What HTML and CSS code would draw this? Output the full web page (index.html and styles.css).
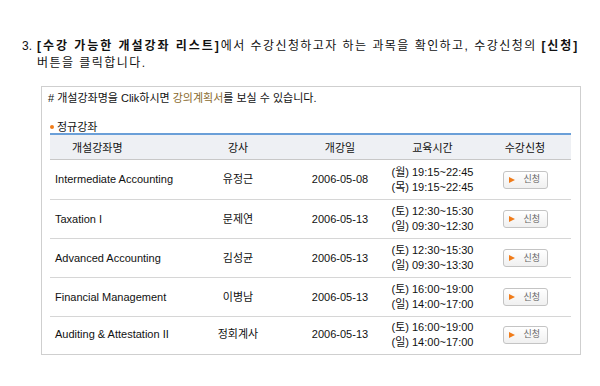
FILE: index.html
```html
<!DOCTYPE html>
<html lang="ko">
<head>
<meta charset="utf-8">
<title>개설강좌 리스트</title>
<link rel="stylesheet" href="styles.css">
</head>
<body>
<div class="step">
  <span class="num">3.</span>
  <p class="desc"><b>[수강 가능한 개설강좌 리스트]</b>에서 수강신청하고자 하는 과목을 확인하고, 수강신청의 <b>[신청]</b><br>버튼을 클릭합니다.</p>
</div>
<div class="box">
  <p class="note"># 개설강좌명을 Clik하시면 <span class="hl">강의계획서</span>를 보실 수 있습니다.</p>
  <h3 class="sect"><span class="dot"></span>정규강좌</h3>
  <table class="list">
    <colgroup><col class="c1"><col class="c2"><col class="c3"><col class="c4"><col class="c5"></colgroup>
    <thead>
      <tr><th class="name">개설강좌명</th><th>강사</th><th>개강일</th><th>교육시간</th><th>수강신청</th></tr>
    </thead>
    <tbody>
      <tr><td class="name">Intermediate Accounting</td><td>유정근</td><td>2006-05-08</td><td>(월) 19:15~22:45<br>(목) 19:15~22:45</td><td><span class="btn"><i></i>신청</span></td></tr>
      <tr><td class="name">Taxation I</td><td>문제연</td><td>2006-05-13</td><td>(토) 12:30~15:30<br>(일) 09:30~12:30</td><td><span class="btn"><i></i>신청</span></td></tr>
      <tr><td class="name">Advanced Accounting</td><td>김성균</td><td>2006-05-13</td><td>(토) 12:30~15:30<br>(일) 09:30~13:30</td><td><span class="btn"><i></i>신청</span></td></tr>
      <tr><td class="name">Financial Management</td><td>이병남</td><td>2006-05-13</td><td>(토) 16:00~19:00<br>(일) 14:00~17:00</td><td><span class="btn"><i></i>신청</span></td></tr>
      <tr><td class="name">Auditing &amp; Attestation II</td><td>정회계사</td><td>2006-05-13</td><td>(토) 16:00~19:00<br>(일) 14:00~17:00</td><td><span class="btn"><i></i>신청</span></td></tr>
    </tbody>
  </table>
</div>
</body>
</html>
```
FILE: styles.css
```css
body {
  margin: 0;
  background: #fff;
  color: #111;
  font-family: "Liberation Sans", "Noto Sans CJK KR", sans-serif;
  font-size: 12px;
}
.step {
  display: flex;
  padding: 38px 0 0 22px;
  line-height: 17px;
}
.num { width: 15px; flex: none; }
.desc {
  margin: 0;
  width: 550px;
  white-space: nowrap;
  letter-spacing: 1.45px;
}
.desc b { letter-spacing: 1.95px; }
.box {
  margin: 14px 0 0 41px;
  width: 538px;
  border: 1px solid #cfcfcf;
  padding: 3px 0 2px;
}
.note {
  margin: 0 0 0 6px;
  font-size: 11px;
  line-height: 16px;
}
.hl { color: #8a6a2c; }
.sect {
  margin: 15px 0 0 8px;
  font-size: 11px;
  font-weight: normal;
  line-height: 12px;
  display: flex;
  align-items: center;
  gap: 3px;
}
.dot {
  width: 4px;
  height: 4px;
  border-radius: 50%;
  background: #f07c1a;
}
.list {
  margin: 0 0 0 8px;
  width: 521px;
  border-collapse: collapse;
  font-size: 11px;
  table-layout: fixed;
}
.c1 { width: 132px; }
.c2 { width: 112px; }
.c3 { width: 92px; }
.c4 { width: 93px; }
.c5 { width: 92px; }
.list th {
  background: #eef0f4;
  border-top: 2px solid #6a9fd8;
  border-bottom: 1px solid #c8c8c8;
  font-weight: normal;
  height: 24px;
  padding: 0;
}
.list th.name { text-align: left; padding-left: 22px; }
.list td {
  text-align: center;
  height: 38px;
  padding: 0;
  line-height: 15px;
  border-bottom: 1px solid #d6d6d6;
}
.list tbody tr:first-child td { height: 39px; }
.list tbody tr:last-child td { border-bottom: none; height: 35px; }
.list td.name { text-align: left; padding-left: 5px; }
.btn {
  display: inline-flex;
  align-items: center;
  box-sizing: border-box;
  width: 45px;
  height: 18px;
  border: 1px solid #c4c4c4;
  border-radius: 3px;
  background: linear-gradient(#ffffff, #f0f0f0);
  font-size: 9px;
  color: #666;
  padding-left: 5px;
  gap: 9px;
  vertical-align: middle;
}
.btn i {
  width: 0;
  height: 0;
  border-left: 6px solid #f07c1a;
  border-top: 3px solid transparent;
  border-bottom: 3px solid transparent;
}
```
